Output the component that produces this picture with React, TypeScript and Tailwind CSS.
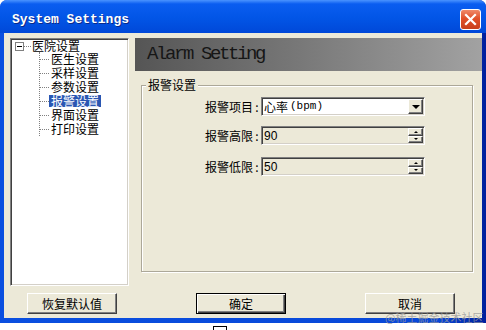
import React from "react"

const cjk = "font-['Noto_Sans_CJK_SC','Noto_Sans',sans-serif]"

const sunken =
  "border border-t-[#808080] border-l-[#808080] border-b-white border-r-white shadow-[inset_1px_1px_0_#404040,inset_-1px_-1px_0_#d4d0c8]"

const raised =
  "border border-t-white border-l-white border-b-[#404040] border-r-[#404040] shadow-[inset_-1px_-1px_0_#808080]"

function TreeRow({ label, selected }: { label: string; selected?: boolean }) {
  return (
    <div className="flex h-[14px] items-center">
      <div className="w-[9px] border-t border-dotted border-[#808080]" />
      <span
        className={
          "inline-block h-[12px] px-[2px] leading-[12px] " +
          (selected ? "bg-[#2a56b2] text-white" : "text-black")
        }
      >
        {label}
      </span>
    </div>
  )
}

function FieldLabel({ text }: { text: string }) {
  return (
    <span className="w-[119px] text-right text-black">
      {text}
      <span className="inline-block w-[8px] text-center">:</span>
    </span>
  )
}

function SpinBox({ value }: { value: string }) {
  return (
    <div className={"flex h-[19px] w-[164px] items-stretch bg-[#ece9d8] " + sunken}>
      <div className="flex flex-1 items-center pl-[2px] font-['Liberation_Sans',sans-serif] text-[12px] text-black">
        {value}
      </div>
      <div className="flex w-[16px] flex-col py-[1px] pr-[1px]">
        <div className={"flex flex-1 items-center justify-center bg-[#ece9d8] " + raised}>
          <div className="h-0 w-0 border-x-[2px] border-b-[2px] border-x-transparent border-b-black" />
        </div>
        <div className={"flex flex-1 items-center justify-center bg-[#ece9d8] " + raised}>
          <div className="h-0 w-0 border-x-[2px] border-t-[2px] border-x-transparent border-t-black" />
        </div>
      </div>
    </div>
  )
}

export default function App() {
  const children = ["医生设置", "采样设置", "参数设置", "报警设置", "界面设置", "打印设置"]

  return (
    <div className={"relative h-[330px] w-[486px] overflow-hidden bg-white text-[12px] " + cjk}>
      {/* window frame */}
      <div className="flex h-[323px] flex-col rounded-t-[7px] bg-[linear-gradient(to_right,#0a4fe0,#0848d8_90%,#001f9c)]">
        {/* title bar */}
        <div className="flex h-[33px] shrink-0 items-center justify-between rounded-t-[7px] bg-[linear-gradient(to_bottom,#4a93ff,#0a5df0_12%,#0255e6_55%,#0048d8)] pl-[12px] pr-[5px] pt-[6px]">
          <span className="font-['Liberation_Mono',monospace] text-[13px] font-bold text-white [text-shadow:1px_1px_0_#0a2a8a]">
            System Settings
          </span>
          <div className="flex h-[21px] w-[21px] items-center justify-center rounded-[3px] border border-white bg-[linear-gradient(to_bottom,#f08a6a,#e0502a_45%,#c8401c)]">
            <svg width="13" height="13" viewBox="0 0 13 13">
              <path d="M2 2 L11 11 M11 2 L2 11" stroke="white" strokeWidth="2.2" strokeLinecap="square" />
            </svg>
          </div>
        </div>

        {/* client area */}
        <div className="mx-[4px] flex h-[285px] flex-col bg-[#ece9d8] pt-[5px]">
          <div className="flex h-[248px] gap-[6px] pl-[6px]">
            {/* tree */}
            <div className={"w-[119px] bg-white pl-[4px] " + sunken}>
              <div className="flex h-[14px] items-center">
                <div className="flex h-[9px] w-[9px] items-center justify-center border border-[#808080] bg-white">
                  <div className="h-[1px] w-[5px] bg-black" />
                </div>
                <div className="w-[7px] border-t border-dotted border-[#808080]" />
                <span className="inline-block h-[12px] px-[1px] leading-[12px] text-black">医院设置</span>
              </div>
              <div className="ml-[24px] mt-[-1px] border-l border-dotted border-[#808080]">
                {children.map((c, i) => (
                  <div key={c} className={i === children.length - 1 ? "-mb-[7px]" : ""}>
                    <TreeRow label={c} selected={c === "报警设置"} />
                  </div>
                ))}
              </div>
            </div>

            {/* right panel */}
            <div className="flex flex-1 flex-col">
              <div className="flex h-[33px] items-center bg-[linear-gradient(to_right,#555555,#7a7a7a_50%,#a2a2a2)] pl-[12px]">
                <span className="font-['Liberation_Mono',monospace] text-[19px] tracking-[-2.4px] text-[#161616]">
                  Alarm Setting
                </span>
              </div>

              {/* group box */}
              <div className="relative ml-[6px] mt-[14px] h-[187px] w-[332px] border border-[#aca899] shadow-[inset_1px_1px_0_#fff,1px_1px_0_#fff]">
                <span className="absolute -top-[9px] left-[4px] bg-[#ece9d8] px-[2px] leading-[16px] text-black">
                  报警设置
                </span>

                <div className="mt-[11px] flex items-center">
                  <FieldLabel text="报警项目" />
                  <div className={"flex h-[19px] w-[164px] items-stretch bg-white " + sunken}>
                    <div className="flex flex-1 items-center pl-[2px] text-black">
                      心率
                      <span className="ml-[2px] font-['Liberation_Mono',monospace] text-[11px]">(bpm)</span>
                    </div>
                    <div className="py-[1px] pr-[1px]">
                      <div className={"flex h-full w-[15px] items-center justify-center bg-[#ece9d8] " + raised}>
                        <div className="h-0 w-0 border-x-[4px] border-t-[4px] border-x-transparent border-t-black" />
                      </div>
                    </div>
                  </div>
                </div>

                <div className="mt-[10px] flex items-center">
                  <FieldLabel text="报警高限" />
                  <SpinBox value="90" />
                </div>

                <div className="mt-[12px] flex items-center">
                  <FieldLabel text="报警低限" />
                  <SpinBox value="50" />
                </div>
              </div>
            </div>
          </div>

          {/* buttons */}
          <div className="mt-[7px] flex gap-[79px] pl-[23px]">
            <button className={"h-[21px] w-[90px] bg-[#ece9d8] text-black " + raised}>恢复默认值</button>
            <button className="h-[21px] w-[90px] border border-black bg-[#ece9d8] text-black shadow-[inset_1px_1px_0_#fff,inset_-1px_-1px_0_#404040,inset_-2px_-2px_0_#808080]">
              确定
            </button>
            <button className={"h-[21px] w-[90px] bg-[#ece9d8] text-black " + raised}>取消</button>
          </div>
        </div>
      </div>

      {/* watermark */}
      <span className="absolute left-[385px] top-[311px] text-[11px] leading-[12px] text-[#9a9a9a]/80">
        @稀土掘金技术社区
      </span>
      {/* taskbar icon peeking */}
      <div className="absolute left-[213px] top-[326px] h-[8px] w-[14px] border border-black bg-white" />
    </div>
  )
}
